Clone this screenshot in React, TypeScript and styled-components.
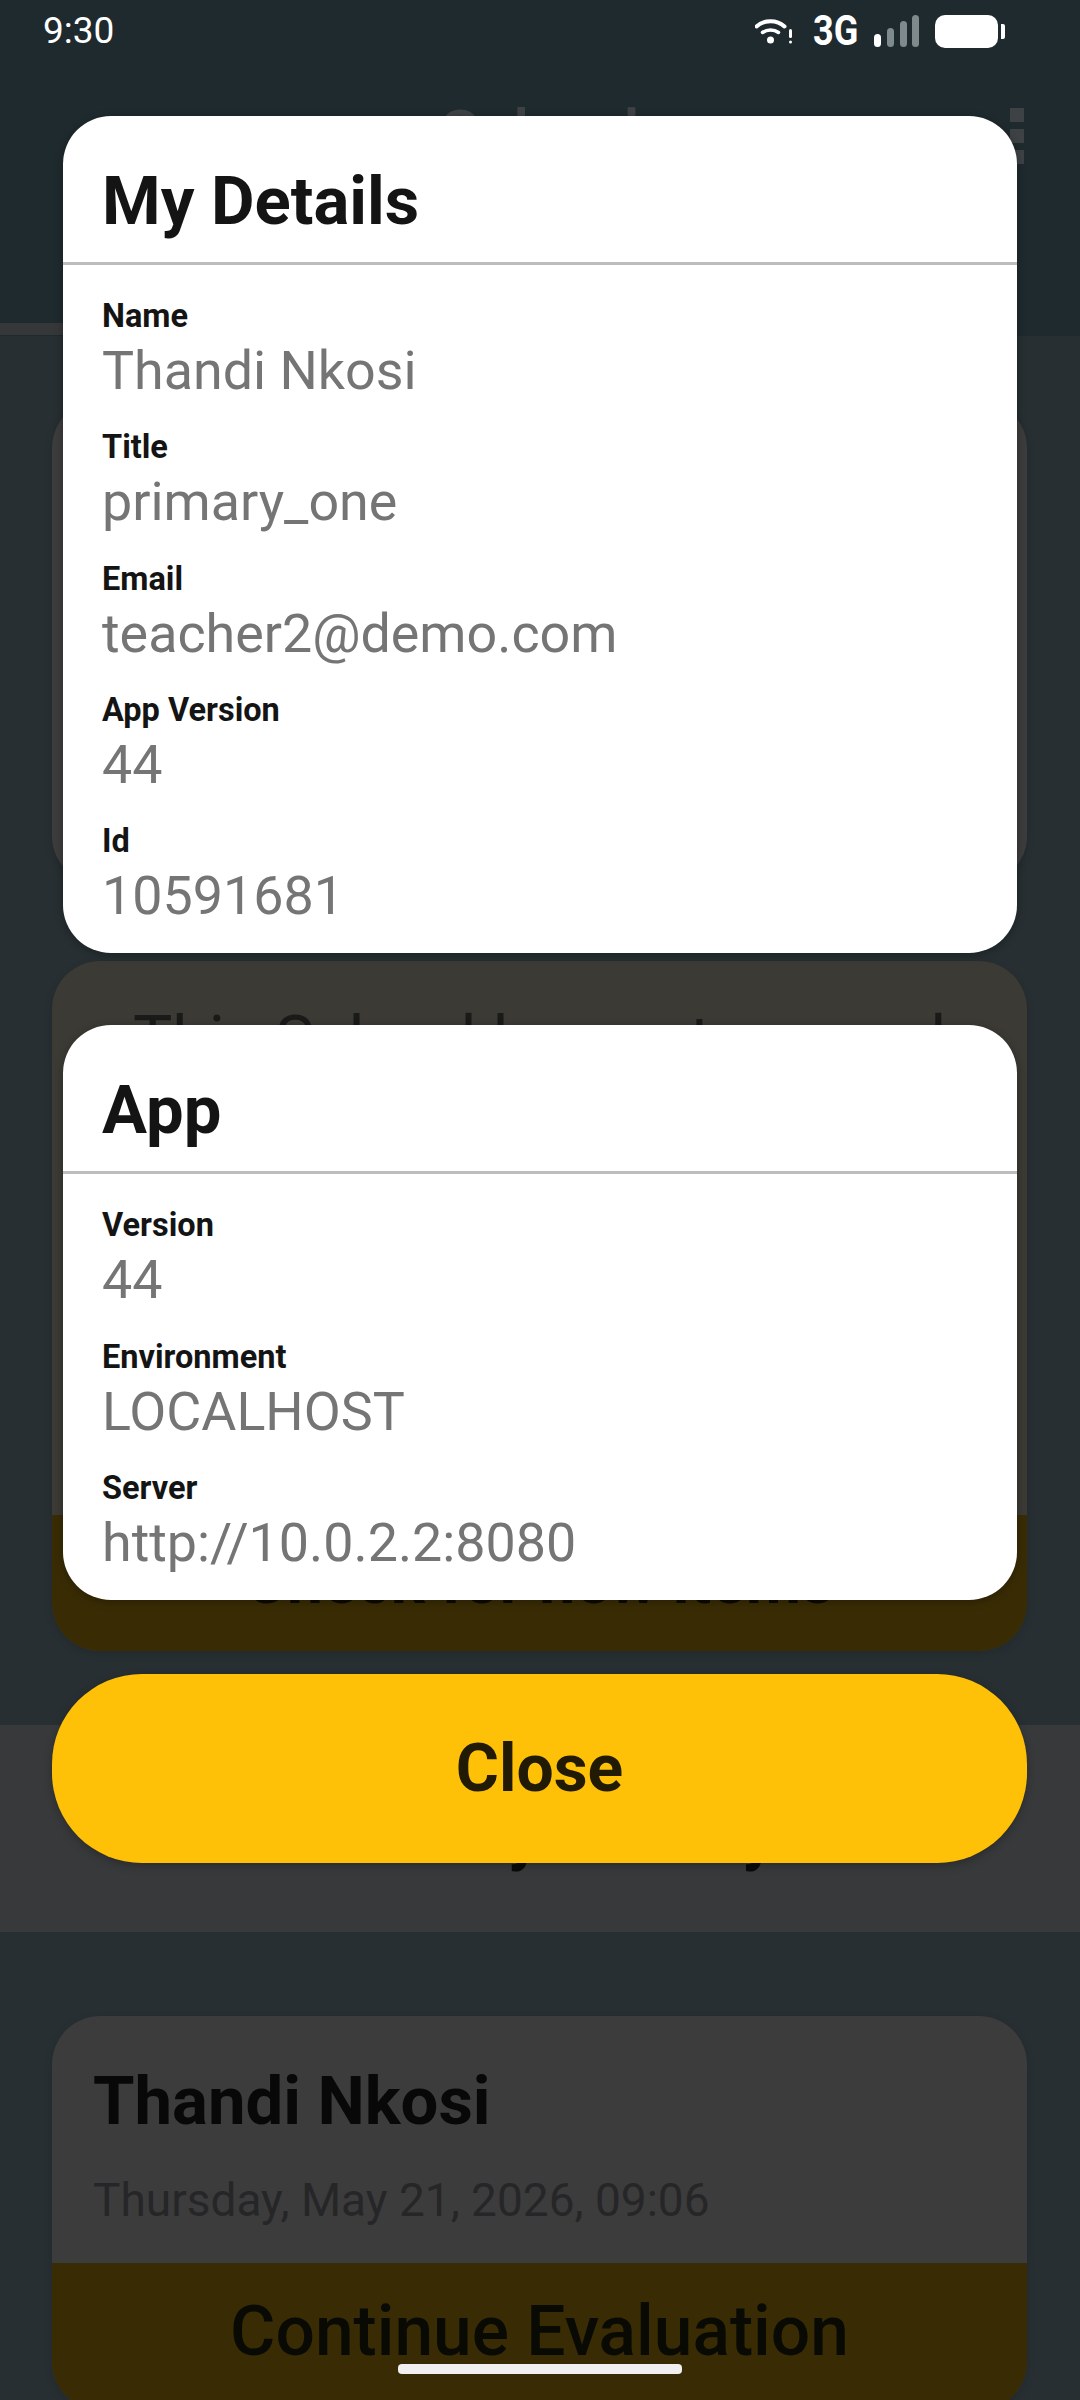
import React from 'react';
import styled, { createGlobalStyle } from 'styled-components';

const GlobalStyle = createGlobalStyle`
  html, body {
    margin: 0;
    padding: 0;
    background: #272f32;
    font-family: Roboto, "Liberation Sans", sans-serif;
  }
`;

const Page = styled.div`
  position: relative;
  width: 1080px;
  height: 2400px;
  overflow: hidden;
  background: #272f32;
`;

const AppBar = styled.header`
  height: 336px;
  background: #1f2a2e;
  display: flex;
  flex-direction: column;
`;

const StatusBar = styled.div`
  height: 62px;
  padding: 0 82px 0 43px;
  display: flex;
  align-items: center;
  justify-content: space-between;
  color: #fff;
`;

const Clock = styled.span`
  font-size: 37px;
  line-height: 60px;
`;

const StatusIcons = styled.div`
  display: flex;
  align-items: center;
`;

const NetworkLabel = styled.span`
  font-size: 42px;
  font-weight: 700;
  line-height: 42px;
  margin: 0 17px 0 20px;
  transform: scaleX(0.86);
  transform-origin: left center;
  width: 44px;
`;

const Battery = styled.div`
  width: 63px;
  height: 33px;
  border-radius: 10px;
  background: #fff;
  margin-left: 16px;
  position: relative;

  &::after {
    content: '';
    position: absolute;
    left: 66px;
    top: 9px;
    width: 4px;
    height: 15px;
    border-radius: 0 2px 2px 0;
    background: #fff;
  }
`;

const TitleRow = styled.div`
  height: 82px;
  padding: 0 56px 0 0;
  margin-top: 33px;
  display: flex;
  align-items: center;
  justify-content: flex-end;
  position: relative;
`;

const AppTitle = styled.span`
  position: absolute;
  left: 0;
  right: 0;
  top: 0;
  text-align: center;
  font-size: 65px;
  line-height: 78px;
  font-weight: 500;
  color: #3e4245;
`;

const MoreDots = styled.div`
  display: flex;
  flex-direction: column;
  gap: 7px;
`;

const Dot = styled.span`
  width: 14px;
  height: 14px;
  background: #3e4245;
`;

const TabIndicator = styled.div`
  width: 320px;
  height: 12px;
  margin-top: 146px;
  background: #353739;
`;

const Backdrop = styled.div`
  display: flex;
  flex-direction: column;
`;

const DimCard = styled.section<{ $tone: string; $height: number; $top: number }>`
  margin: ${(p) => p.$top}px 53px 0 52px;
  height: ${(p) => p.$height}px;
  border-radius: 48px;
  background: ${(p) => p.$tone};
  overflow: hidden;
  display: flex;
  flex-direction: column;
  box-shadow: 0 3px 8px rgba(0, 0, 0, 0.12);
`;

const NoticeText = styled.div`
  flex: 1;
  padding-top: 42px;
  text-align: center;
  font-size: 66px;
  line-height: 76px;
  color: #1a1a18;
  white-space: nowrap;
`;

const DimAction = styled.div<{ $height: number }>`
  height: ${(p) => p.$height}px;
  background: #392c05;
  display: flex;
  justify-content: center;
  line-height: 70px;
  color: #0a0a04;
`;

const CheckLabel = styled.span`
  padding-top: 32px;
  font-weight: 700;
  font-size: 64px;
  color: #0d0a02;
`;

const ContinueLabel = styled.span`
  padding-top: 34px;
  font-weight: 500;
  font-size: 69.5px;
`;

const Band = styled.div`
  margin-top: 74px;
  height: 207px;
  background: #37393a;
  text-align: center;
  font-size: 64px;
  font-weight: 700;
  line-height: 70px;
  padding-top: 77px;
  box-sizing: border-box;
  color: #0a0a0a;
`;

const PersonBlock = styled.div`
  flex: 1;
  padding: 48px 41px 0;
`;

const PersonName = styled.div`
  font-size: 67px;
  line-height: 74px;
  font-weight: 700;
  color: #080808;
`;

const PersonDate = styled.div`
  margin-top: 35px;
  font-size: 46px;
  line-height: 54px;
  color: #262628;
`;

const ModalLayer = styled.div`
  position: absolute;
  inset: 0;
  padding: 116px 53px 0 52px;
  display: flex;
  flex-direction: column;
  align-items: stretch;
`;

const InfoCard = styled.section<{ $gap: number }>`
  margin: 0 10px ${(p) => p.$gap}px 11px;
  padding-bottom: 3px;
  border-radius: 48px;
  background: #fff;
  overflow: hidden;
  box-shadow: 0 2px 8px rgba(0, 0, 0, 0.3);
`;

const InfoHeader = styled.h2`
  margin: 0;
  height: 149px;
  padding: 24px 39px 0;
  box-sizing: border-box;
  display: flex;
  align-items: center;
  font-size: 67px;
  font-weight: 700;
  color: #141414;
  border-bottom: 3px solid #bdbdbd;
`;

const InfoBody = styled.div`
  padding: 29px 39px 0;
  display: flex;
  flex-direction: column;
`;

const Field = styled.div`
  display: flex;
  flex-direction: column;
  height: 131.25px;
`;

const FieldLabel = styled.span`
  font-size: 32.5px;
  line-height: 44px;
  font-weight: 700;
  color: #141414;
`;

const FieldValue = styled.span`
  font-size: 53.8px;
  line-height: 66px;
  color: #757575;
`;

const CloseButton = styled.button`
  height: 189px;
  border: none;
  border-radius: 90px;
  background: #ffc107;
  color: #211a04;
  font-family: inherit;
  font-size: 66px;
  font-weight: 700;
  box-shadow: 0 3px 8px rgba(0, 0, 0, 0.25);
`;

const HomeIndicator = styled.div`
  position: absolute;
  left: 398px;
  bottom: 26px;
  width: 284px;
  height: 10px;
  border-radius: 4px;
  background: #f0f0f0;
`;

const details = [
  { label: 'Name', value: 'Thandi Nkosi' },
  { label: 'Title', value: 'primary_one' },
  { label: 'Email', value: 'teacher2@demo.com' },
  { label: 'App Version', value: '44' },
  { label: 'Id', value: '10591681' },
];

const appInfo = [
  { label: 'Version', value: '44' },
  { label: 'Environment', value: 'LOCALHOST' },
  { label: 'Server', value: 'http://10.0.2.2:8080' },
];

const WifiIcon = () => (
  <svg width="38" height="26" viewBox="0 0 38 26" fill="none">
    <path d="M1.5 8.5C9 1.5 22 1.5 29.5 8.5" stroke="#fff" strokeWidth="4" strokeLinecap="round" />
    <path d="M7.5 14.5C12 11 19 11 23.5 14.5" stroke="#fff" strokeWidth="3.5" strokeLinecap="round" />
    <circle cx="15.5" cy="22" r="3.5" fill="#fff" />
    <rect x="34" y="11" width="3" height="9" rx="1.5" fill="#fff" />
    <rect x="34" y="22.5" width="3" height="3" rx="1.5" fill="#fff" />
  </svg>
);

const SignalIcon = () => (
  <svg width="45" height="32" viewBox="0 0 45 32">
    <rect x="0" y="19" width="7" height="13" rx="3.5" fill="#fff" />
    <rect x="13" y="13" width="7" height="19" rx="3.5" fill="#7f8a8d" />
    <rect x="26" y="6" width="7" height="26" rx="3.5" fill="#7f8a8d" />
    <rect x="38" y="0" width="7" height="32" rx="3.5" fill="#7f8a8d" />
  </svg>
);

const InfoPanel = ({ title, rows, gap }: { title: string; rows: { label: string; value: string }[]; gap: number }) => (
  <InfoCard $gap={gap}>
    <InfoHeader>{title}</InfoHeader>
    <InfoBody>
      {rows.map((row) => (
        <Field key={row.label}>
          <FieldLabel>{row.label}</FieldLabel>
          <FieldValue>{row.value}</FieldValue>
        </Field>
      ))}
    </InfoBody>
  </InfoCard>
);

export default function App() {
  return (
    <Page>
      <GlobalStyle />
      <Backdrop>
        <AppBar>
          <StatusBar>
            <Clock>9:30</Clock>
            <StatusIcons>
              <WifiIcon />
              <NetworkLabel>3G</NetworkLabel>
              <SignalIcon />
              <Battery />
            </StatusIcons>
          </StatusBar>
          <TitleRow>
            <AppTitle>School</AppTitle>
            <MoreDots>
              <Dot />
              <Dot />
              <Dot />
            </MoreDots>
          </TitleRow>
          <TabIndicator />
        </AppBar>
        <DimCard $tone="#3c3c3c" $height={484} $top={64} />
        <DimCard $tone="#3b3a34" $height={690} $top={77}>
          <NoticeText>This School has not opened</NoticeText>
          <DimAction $height={136}>
            <CheckLabel>Check for new items</CheckLabel>
          </DimAction>
        </DimCard>
        <Band>Monthly Activity</Band>
        <DimCard $tone="#3c3c3c" $height={394} $top={84}>
          <PersonBlock>
            <PersonName>Thandi Nkosi</PersonName>
            <PersonDate>Thursday, May 21, 2026, 09:06</PersonDate>
          </PersonBlock>
          <DimAction $height={147}>
            <ContinueLabel>Continue Evaluation</ContinueLabel>
          </DimAction>
        </DimCard>
      </Backdrop>
      <ModalLayer>
        <InfoPanel title="My Details" rows={details} gap={72} />
        <InfoPanel title="App" rows={appInfo} gap={74} />
        <CloseButton>Close</CloseButton>
      </ModalLayer>
      <HomeIndicator />
    </Page>
  );
}
